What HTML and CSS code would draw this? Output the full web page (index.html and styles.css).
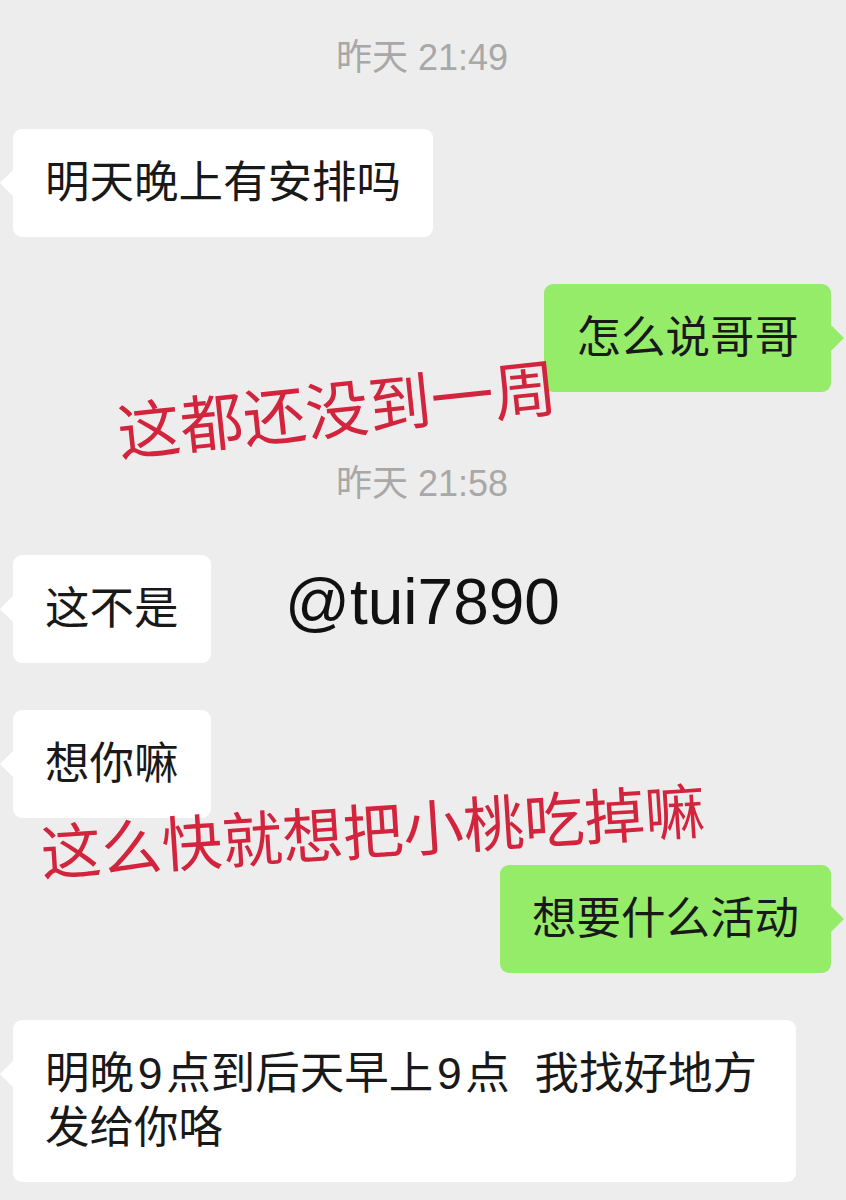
FILE: index.html
```html
<!DOCTYPE html>
<html lang="zh-CN">
  <head>
    <meta charset="UTF-8" />
    <title>聊天记录</title>
    <link rel="stylesheet" href="styles.css">
  </head>
  <body>
    <div class="chat">
      <div class="time">昨天 21:49</div>
      <div class="row left">
        <div class="bubble">明天晚上有安排吗</div>
      </div>
      <div class="row right">
        <div class="bubble green">怎么说哥哥</div>
      </div>

      <div class="time later">昨天 21:58</div>
      <div class="row left">
        <div class="bubble">这不是</div>
      </div>
      <div class="row left">
        <div class="bubble">想你嘛</div>
      </div>
      <div class="row right">
        <div class="bubble green">想要什么活动</div>
      </div>
      <div class="row left">
        <div class="bubble wide">明晚&#8202;9&#8202;点到后天早上&#8202;9&#8202;点  我找好地方发给你咯</div>
      </div>

      <!-- annotations drawn over the chat -->
      <div class="mark red red-one">这都还没到一周</div>
      <div class="mark handle">@tui7890</div>
      <div class="mark red red-two">这么快就想把小桃吃掉嘛</div>
    </div>
  </body>
</html>
```

FILE: styles.css
```css
html {
  background-color: #ededed;
}

body {
  margin: 0;
  font-family: "Liberation Sans", "Noto Sans CJK SC", sans-serif;
  color: #191919;
}

.chat {
  position: relative;
  display: flex;
  flex-direction: column;
  gap: 47px;
  padding: 38px 15px 0 13px;
  height: 1162px;
  overflow: hidden;
}

.time {
  height: 40px;
  line-height: 40px;
  margin-bottom: 4px;
  text-align: center;
  font-size: 36px;
  color: #a8a8a8;
}

.time.later {
  margin-top: 25px;
}

.row {
  display: flex;
}

.row.right {
  justify-content: flex-end;
}

.bubble {
  position: relative;
  box-sizing: border-box;
  max-width: 783px;
  padding: 27px 32px;
  background-color: #fff;
  border-radius: 9px;
  font-size: 44.5px;
  line-height: 54px;
}

.bubble::before {
  content: "";
  position: absolute;
  top: 40px;
  left: -13px;
  border-top: 14px solid transparent;
  border-bottom: 14px solid transparent;
  border-right: 14px solid #fff;
}

.bubble.green {
  background-color: #95ec69;
}

.bubble.green::before {
  left: auto;
  right: -13px;
  border-right: none;
  border-left: 14px solid #95ec69;
}

.bubble.wide {
  white-space: pre-wrap;
}

.mark {
  position: absolute;
  white-space: nowrap;
  line-height: 1;
}

.red {
  font-family: "Noto Sans CJK SC", sans-serif;
  color: #d2243d;
}

.red-one {
  left: 116px;
  top: 374px;
  font-size: 63px;
  transform: rotate(-6deg);
}

.red-two {
  left: 40px;
  top: 798px;
  font-size: 60.5px;
  transform: rotate(-3.7deg);
}

.handle {
  left: 285px;
  top: 570px;
  font-size: 64px;
  line-height: 64px;
  color: #111;
}
```
